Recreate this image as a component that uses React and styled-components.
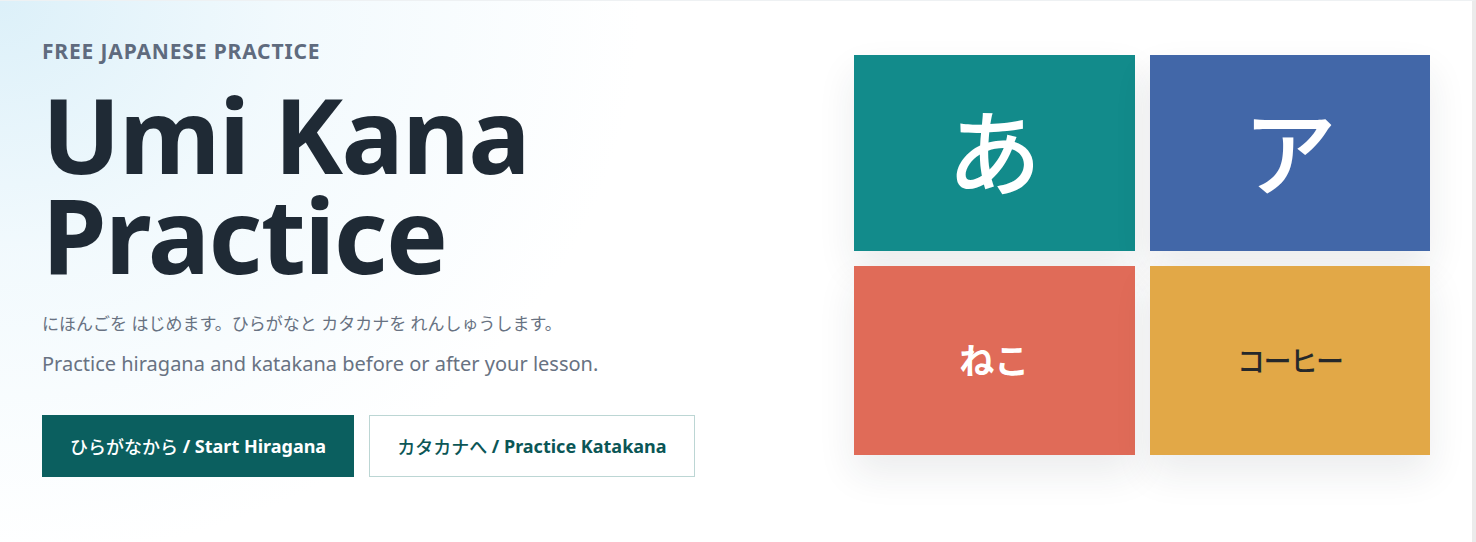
import styled, { createGlobalStyle } from 'styled-components'

const GlobalStyle = createGlobalStyle`
    * { box-sizing: border-box; }
    html, body {
        margin: 0;
        padding: 0;
        background: #ffffff;
    }
    body {
        font-family: "Noto Sans", "Noto Sans CJK JP", sans-serif;
        color: #1f2a35;
    }
`

const Page = styled.div`
    min-height: 542px;
    border-top: 1px solid #eef1f3;
    border-right: 4px solid #ebebeb;
    background:
        radial-gradient(ellipse 640px 560px at 0% 0%, #dcf0f9 0%, rgba(233, 246, 252, 0.6) 45%, rgba(255, 255, 255, 0) 100%),
        #ffffff;
`

const Hero = styled.section`
    display: grid;
    grid-template-columns: 1fr 576px;
    gap: 40px;
    padding: 35px 42px 40px;
`

const Intro = styled.div`
    display: flex;
    flex-direction: column;
`

const Eyebrow = styled.p`
    margin: 0;
    font-size: 21px;
    font-weight: 700;
    letter-spacing: 0.04em;
    color: #5f6b7e;
    line-height: 30px;
`

const Title = styled.h1`
    margin: 18px 0 0;
    font-size: 104px;
    font-weight: 700;
    line-height: 100px;
    letter-spacing: -0.015em;
    color: #1f2a35;
`

const Lead = styled.p`
    margin: ${p => p.$top || 0}px 0 0;
    font-size: ${p => p.$size || 20}px;
    line-height: 28px;
    color: #687282;
`

const Actions = styled.div`
    display: flex;
    gap: 15px;
    margin-top: 37px;
`

const Button = styled.a`
    display: inline-flex;
    align-items: center;
    justify-content: center;
    height: 62px;
    padding: 0 27px;
    font-size: 18px;
    font-weight: 700;
    text-decoration: none;
    cursor: pointer;
    background: ${p => p.$primary ? '#0b5f5f' : '#ffffff'};
    color: ${p => p.$primary ? '#ffffff' : '#0b5656'};
    border: 1px solid ${p => p.$primary ? '#0b5f5f' : '#bcd6d4'};

    .jp {
        font-weight: 500;
    }
`

const TileGrid = styled.div`
    display: grid;
    grid-template-columns: 1fr 1fr;
    grid-template-rows: 196px 189px;
    gap: 15px;
    margin-top: 19px;
`

const Tile = styled.div`
    display: flex;
    align-items: center;
    justify-content: center;
    background: ${p => p.$bg};
    color: ${p => p.$dark ? '#25282b' : '#ffffff'};
    font-size: ${p => p.$size}px;
    font-weight: ${p => p.$weight || 500};
    letter-spacing: ${p => p.$tight ? '-0.06em' : '0'};
    box-shadow: 0 18px 36px rgba(30, 40, 50, 0.09);
    line-height: 1;
`

const tiles = [
    { text: 'あ', bg: '#128b8b', size: 94 },
    { text: 'ア', bg: '#4267a8', size: 94 },
    { text: 'ねこ', bg: '#e06b58', size: 35, weight: 700 },
    { text: 'コーヒー', bg: '#e2a847', size: 28, dark: true, tight: true },
]

function App() {
    return (
        <Page>
            <GlobalStyle />
            <Hero>
                <Intro>
                    <Eyebrow>FREE JAPANESE PRACTICE</Eyebrow>
                    <Title>Umi Kana<br />Practice</Title>
                    <Lead $top={26} $size={17}>にほんごを はじめます。ひらがなと カタカナを れんしゅうします。</Lead>
                    <Lead $top={12}>Practice hiragana and katakana before or after your lesson.</Lead>
                    <Actions>
                        <Button $primary><span className="jp">ひらがなから</span>&nbsp;/ Start Hiragana</Button>
                        <Button><span className="jp">カタカナへ</span>&nbsp;/ Practice Katakana</Button>
                    </Actions>
                </Intro>
                <TileGrid>
                    {tiles.map(t => (
                        <Tile key={t.text} $bg={t.bg} $size={t.size} $weight={t.weight} $dark={t.dark} $tight={t.tight}>
                            {t.text}
                        </Tile>
                    ))}
                </TileGrid>
            </Hero>
        </Page>
    )
}

export default App
